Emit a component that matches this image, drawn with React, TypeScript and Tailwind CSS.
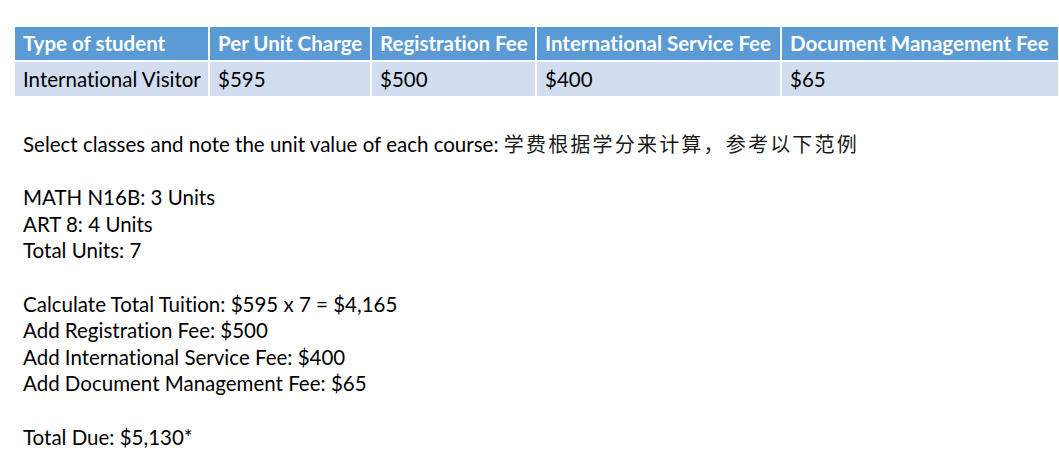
import React from "react";

const headers = [
  "Type of student",
  "Per Unit Charge",
  "Registration Fee",
  "International Service Fee",
  "Document Management Fee",
];
const values = ["International Visitor", "$595", "$500", "$400", "$65"];

const lines: (string | null)[] = [
  null,
  "",
  "MATH N16B: 3 Units",
  "ART 8: 4 Units",
  "Total Units: 7",
  "",
  "Calculate Total Tuition: $595 x 7 = $4,165",
  "Add Registration Fee: $500",
  "Add International Service Fee: $400",
  "Add Document Management Fee: $65",
  "",
  "Total Due: $5,130*",
];

export default function App() {
  return (
    <div
      className="w-[1059px] h-[475px] bg-white text-black overflow-hidden"
      style={{ fontFamily: "Lato, 'Noto Sans', sans-serif", fontVariantLigatures: "none" }}
    >
      <div className="pt-[27px] pl-[15px]">
        <div className="grid grid-cols-[193px_160px_163px_243px_276px] gap-x-[2px] gap-y-[2px]">
          {headers.map((h) => (
            <div
              key={h}
              className="h-[33px] bg-[#5b9bd5] text-white font-bold text-[20.5px] pl-[8px] flex items-center whitespace-nowrap"
            >
              {h}
            </div>
          ))}
          {values.map((v, i) => (
            <div
              key={i}
              className="h-[34px] bg-[#d2deef] text-[20.5px] pl-[8px] flex items-center whitespace-nowrap"
            >
              {v}
            </div>
          ))}
        </div>
      </div>
      <div className="pl-[23px] pt-[35px] text-[20.5px] leading-[26.6px]">
        {lines.map((l, i) =>
          l === null ? (
            <div key={i} className="h-[26.6px] whitespace-nowrap">
              Select classes and note the unit value of each course:{" "}
              <span
                className="text-[20px] tracking-[2.2px] text-[#1a1a1a]"
                style={{ fontFamily: "'Noto Sans CJK SC', sans-serif" }}
              >
                学费根据学分来计算，参考以下范例
              </span>
            </div>
          ) : (
            <div key={i} className="h-[26.6px] whitespace-nowrap">
              {l}
            </div>
          )
        )}
      </div>
    </div>
  );
}
